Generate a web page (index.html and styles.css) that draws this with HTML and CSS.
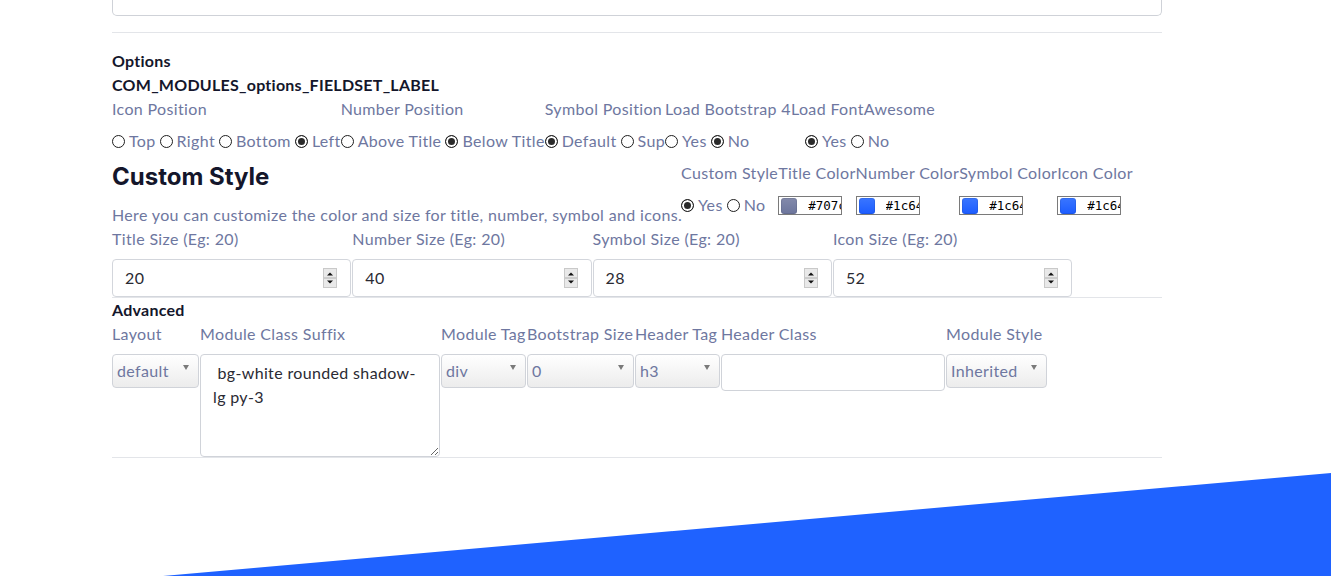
FILE: index.html
```html
<!DOCTYPE html>
<html>
<head>
<meta charset="utf-8">
<link rel="stylesheet" href="styles.css">
</head>
<body>
<div class="page">
  <div class="topbox"></div>
  <div class="rule rule-top"></div>

  <div class="legend legend-first">Options</div>
  <div class="legend">COM_MODULES_options_FIELDSET_LABEL</div>

  <div class="row">
    <div class="field">
      <div class="lbl">Icon Position</div>
      <div class="radios">
        <label class="opt"><input type="radio" name="ip">Top</label>
        <label class="opt"><input type="radio" name="ip">Right</label>
        <label class="opt"><input type="radio" name="ip">Bottom</label>
        <label class="opt"><input type="radio" name="ip" checked>Left</label>
      </div>
    </div>
    <div class="field">
      <div class="lbl">Number Position</div>
      <div class="radios">
        <label class="opt"><input type="radio" name="np">Above Title</label>
        <label class="opt"><input type="radio" name="np" checked>Below Title</label>
      </div>
    </div>
    <div class="field">
      <div class="lbl">Symbol Position</div>
      <div class="radios">
        <label class="opt"><input type="radio" name="sp" checked>Default</label>
        <label class="opt"><input type="radio" name="sp">Sup</label>
      </div>
    </div>
    <div class="field">
      <div class="lbl">Load Bootstrap 4</div>
      <div class="radios">
        <label class="opt"><input type="radio" name="bs">Yes</label>
        <label class="opt"><input type="radio" name="bs" checked>No</label>
      </div>
    </div>
    <div class="field">
      <div class="lbl">Load FontAwesome</div>
      <div class="radios radios-fa">
        <label class="opt"><input type="radio" name="fa" checked>Yes</label>
        <label class="opt"><input type="radio" name="fa">No</label>
      </div>
    </div>
  </div>

  <div class="custom">
    <div class="custom-intro">
      <h2 class="heading">Custom Style</h2>
      <p class="desc">Here you can customize the color and size for title, number, symbol and icons.</p>
    </div>
    <div class="row">
      <div class="field">
        <div class="lbl">Custom Style</div>
        <div class="radios">
          <label class="opt"><input type="radio" name="cs" checked>Yes</label>
          <label class="opt"><input type="radio" name="cs">No</label>
        </div>
      </div>
      <div class="field">
        <div class="lbl">Title Color</div>
        <div class="color"><span class="swatch swatch-gray"></span><input class="hex" type="text" value="#707ca3" readonly></div>
      </div>
      <div class="field">
        <div class="lbl">Number Color</div>
        <div class="color"><span class="swatch"></span><input class="hex" type="text" value="#1c64ff" readonly></div>
      </div>
      <div class="field">
        <div class="lbl">Symbol Color</div>
        <div class="color"><span class="swatch"></span><input class="hex" type="text" value="#1c64ff" readonly></div>
      </div>
      <div class="field">
        <div class="lbl">Icon Color</div>
        <div class="color"><span class="swatch"></span><input class="hex" type="text" value="#1c64ff" readonly></div>
      </div>
    </div>
  </div>

  <div class="row sizes">
    <div class="field w-size">
      <div class="lbl">Title Size (Eg: 20)</div>
      <div class="num"><span>20</span><svg class="spin" width="14" height="20" viewBox="0 0 14 20"><rect x="0.5" y="0.5" width="13" height="19" fill="#e9e9e9" stroke="#c9c9c9"/><line x1="1" y1="10" x2="13" y2="10" stroke="#b0b0b0"/><path d="M4 7.5h6L7 4.5z" fill="#111"/><path d="M4 12.5h6L7 15.5z" fill="#111"/></svg></div>
    </div>
    <div class="field w-size">
      <div class="lbl">Number Size (Eg: 20)</div>
      <div class="num"><span>40</span><svg class="spin" width="14" height="20" viewBox="0 0 14 20"><rect x="0.5" y="0.5" width="13" height="19" fill="#e9e9e9" stroke="#c9c9c9"/><line x1="1" y1="10" x2="13" y2="10" stroke="#b0b0b0"/><path d="M4 7.5h6L7 4.5z" fill="#111"/><path d="M4 12.5h6L7 15.5z" fill="#111"/></svg></div>
    </div>
    <div class="field w-size">
      <div class="lbl">Symbol Size (Eg: 20)</div>
      <div class="num"><span>28</span><svg class="spin" width="14" height="20" viewBox="0 0 14 20"><rect x="0.5" y="0.5" width="13" height="19" fill="#e9e9e9" stroke="#c9c9c9"/><line x1="1" y1="10" x2="13" y2="10" stroke="#b0b0b0"/><path d="M4 7.5h6L7 4.5z" fill="#111"/><path d="M4 12.5h6L7 15.5z" fill="#111"/></svg></div>
    </div>
    <div class="field w-size">
      <div class="lbl">Icon Size (Eg: 20)</div>
      <div class="num"><span>52</span><svg class="spin" width="14" height="20" viewBox="0 0 14 20"><rect x="0.5" y="0.5" width="13" height="19" fill="#e9e9e9" stroke="#c9c9c9"/><line x1="1" y1="10" x2="13" y2="10" stroke="#b0b0b0"/><path d="M4 7.5h6L7 4.5z" fill="#111"/><path d="M4 12.5h6L7 15.5z" fill="#111"/></svg></div>
    </div>
  </div>

  <div class="rule"></div>
  <div class="legend">Advanced</div>

  <div class="row advanced">
    <div class="field w-layout">
      <div class="lbl">Layout</div>
      <div class="sel">default</div>
    </div>
    <div class="field w-suffix">
      <div class="lbl">Module Class Suffix</div>
      <textarea class="area"> bg-white rounded shadow-lg py-3</textarea>
    </div>
    <div class="field w-tag">
      <div class="lbl">Module Tag</div>
      <div class="sel">div</div>
    </div>
    <div class="field w-bsize">
      <div class="lbl">Bootstrap Size</div>
      <div class="sel">0</div>
    </div>
    <div class="field w-htag">
      <div class="lbl">Header Tag</div>
      <div class="sel">h3</div>
    </div>
    <div class="field w-hclass">
      <div class="lbl">Header Class</div>
      <div class="text-input"></div>
    </div>
    <div class="field w-mstyle">
      <div class="lbl">Module Style</div>
      <div class="sel">Inherited</div>
    </div>
  </div>

  <div class="rule"></div>
</div>
<div class="wedge"></div>
</body>
</html>
```

FILE: styles.css
```css
* { box-sizing: border-box; }

html, body {
  margin: 0;
  padding: 0;
  background: #fff;
}

body {
  font-family: "Lato", "Liberation Sans", sans-serif;
  font-size: 16px;
  letter-spacing: 0.35px;
  color: #6e77a0;
  overflow: hidden;
  height: 576px;
}

.page {
  width: 1050px;
  margin-left: 112px;
}

.topbox {
  height: 16px;
  border: 1px solid #cfd2d8;
  border-top: none;
  border-radius: 0 0 5px 5px;
}

.rule {
  height: 1px;
  background: #e3e5e9;
}

.rule-top {
  margin-top: 16px;
}

.legend {
  font-weight: 700;
  font-size: 16px;
  letter-spacing: 0.25px;
  line-height: 24px;
  color: #14162b;
}

.legend-first {
  margin-top: 16px;
}

.row {
  display: flex;
  align-items: flex-start;
}

.field {
  display: flex;
  flex-direction: column;
  flex: none;
}

.lbl {
  line-height: 24px;
  white-space: nowrap;
}

.radios {
  display: flex;
  gap: 4px;
  margin-top: 8px;
  line-height: 24px;
  white-space: nowrap;
}

.radios-fa { padding-left: 14px; }

.opt {
  display: flex;
  align-items: center;
  gap: 4px;
}

.opt input {
  appearance: none;
  -webkit-appearance: none;
  margin: 0;
  width: 13px;
  height: 13px;
  border: 1px solid #1e1e1e;
  border-radius: 50%;
  background: #fff;
}

.opt input:checked {
  background: #2a2a2a;
  box-shadow: inset 0 0 0 2px #fff;
}

.custom {
  display: flex;
  align-items: flex-start;
  margin-top: 8px;
}

.custom-intro {
  width: 569px;
  flex: none;
}

.heading {
  margin: 0;
  font-family: "Inter", "Liberation Sans", sans-serif;
  font-weight: 700;
  font-size: 24px;
  letter-spacing: 0;
  line-height: 32px;
  color: #14162b;
}

.desc {
  margin: 10px 0 0;
  line-height: 24px;
  white-space: nowrap;
}

.color {
  margin-top: 11px;
  width: 64px;
  height: 19px;
  border: 1px solid #7a7a7a;
  display: flex;
  align-items: center;
  overflow: hidden;
  background: #fff;
}

.swatch {
  flex: none;
  width: 16px;
  height: 16px;
  margin-left: 2px;
  border-radius: 3px;
  background: linear-gradient(#3a76ff, #1c5cff);
  box-shadow: inset 0 0 0 1px rgba(0,0,0,0.08);
}

.swatch-gray {
  background: linear-gradient(#838aab, #6c759c);
}

.hex {
  flex: 1;
  min-width: 0;
  width: 0;
  margin: 0 0 0 11px;
  padding: 0;
  border: none;
  outline: none;
  background: transparent;
  font-family: "DejaVu Sans Mono", "Liberation Mono", monospace;
  font-size: 12.5px;
  letter-spacing: 0;
  color: #000;
}

.w-size { width: 240.3px; }

.num {
  margin-top: 8px;
  height: 38px;
  border: 1px solid #d3d6dc;
  border-radius: 4px;
  display: flex;
  align-items: center;
  justify-content: space-between;
  padding: 0 13px 0 12px;
  color: #2a2a33;
  margin-right: 1px;
  line-height: 22px;
}

.num span { margin-top: -1px; }

.spin { display: block; }

.w-layout { width: 88px; }
.w-suffix { width: 241px; }
.w-tag { width: 86px; }
.w-bsize { width: 108px; }
.w-htag { width: 86px; }
.w-hclass { width: 225px; }
.w-mstyle { width: 102px; }

.sel {
  position: relative;
  margin-top: 8px;
  height: 34px;
  margin-right: 1px;
  border: 1px solid #d0d3d9;
  border-radius: 4px;
  background: linear-gradient(#ffffff, #ececec);
  padding-left: 4px;
  line-height: 32px;
  color: #6e77a0;
}

.sel::after {
  content: "";
  position: absolute;
  right: 9px;
  top: 10px;
  border-left: 3.5px solid transparent;
  border-right: 3.5px solid transparent;
  border-top: 5px solid #7a7a7a;
}

.area {
  display: block;
  margin: 8px 1px 0 0;
  height: 103px;
  width: 240px;
  border: 1px solid #d0d3d9;
  border-radius: 4px;
  padding: 6px 12px;
  font-family: inherit;
  font-size: 16px;
  letter-spacing: 0.35px;
  line-height: 24px;
  color: #2a2a33;
  resize: both;
  outline: none;
}

.text-input {
  margin-top: 8px;
  height: 37px;
  margin-right: 1px;
  border: 1px solid #d0d3d9;
  border-radius: 4px;
  background: #fff;
}

.wedge {
  position: fixed;
  left: 0;
  bottom: 0;
  width: 1331px;
  height: 103px;
  background: #1f62ff;
  clip-path: polygon(163px 103px, 1331px 0, 1331px 103px);
}
```
